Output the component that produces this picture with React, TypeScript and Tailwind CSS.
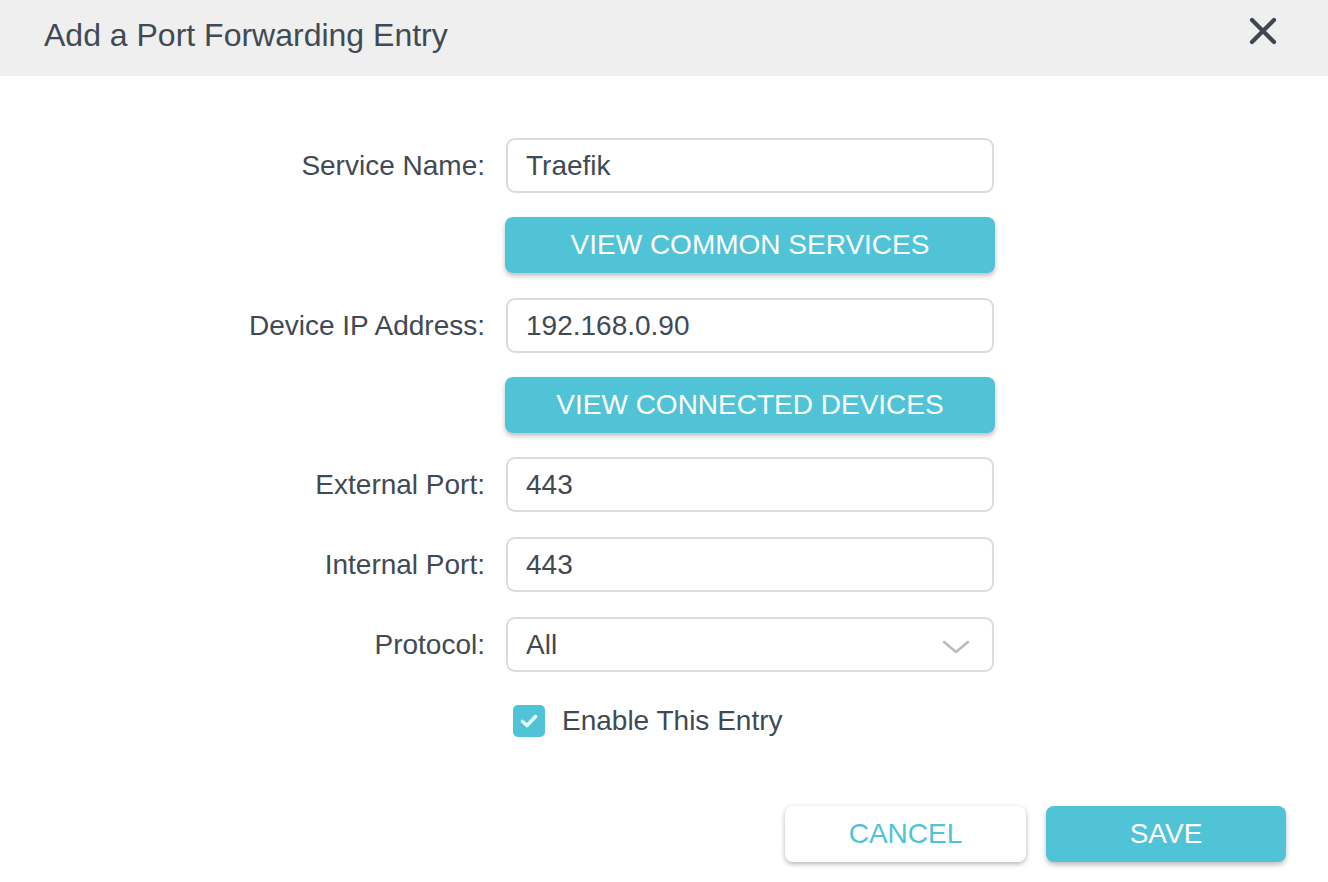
import React from "react";

const font = { fontFamily: '"Liberation Sans", Arial, sans-serif' };

function Field({ label, value, select }: { label: string; value: string; select?: boolean }) {
  return (
    <div className="flex items-center">
      <div className="w-[485px] text-right text-[28px] leading-[32px] text-[#3f4a54]">{label}</div>
      <div className="ml-[21px] w-[488px] h-[55px] rounded-[9px] border-2 border-[#d9dcdd] bg-white flex items-center px-[18px] text-[28px] leading-[32px] text-[#3f4a54] relative">
        {value}
        {select && (
          <svg className="absolute right-[22px] top-[20px]" width="28" height="16" viewBox="0 0 28 16">
            <path d="M2 3 L14 13 L26 3" fill="none" stroke="#b7bcbe" strokeWidth="2.5" strokeLinecap="round" strokeLinejoin="round" />
          </svg>
        )}
      </div>
    </div>
  );
}

function TealButton({ children }: { children: React.ReactNode }) {
  return (
    <div className="flex">
      <div className="ml-[505px] w-[490px] h-[56px] rounded-[8px] bg-[#51c3d6] text-white text-[28px] leading-[32px] flex items-center justify-center shadow-[0_3px_5px_rgba(0,0,0,0.25)]">
        {children}
      </div>
    </div>
  );
}

export default function App() {
  return (
    <div className="w-[1328px] h-[882px] bg-white overflow-hidden" style={font}>
      <div className="h-[76px] bg-[#efefef] flex items-start justify-between pl-[44px] pr-[50px]">
        <div className="pt-[17px] text-[32px] leading-[36px] text-[#3f4a54]">Add a Port Forwarding Entry</div>
        <svg className="mt-[16px]" width="30" height="30" viewBox="0 0 30 30">
          <path d="M4 4 L26 26 M26 4 L4 26" stroke="#3f4650" strokeWidth="4.2" strokeLinecap="round" />
        </svg>
      </div>
      <div className="pt-[62px] flex flex-col">
        <Field label="Service Name:" value="Traefik" />
        <div className="h-[24px]" />
        <TealButton>VIEW COMMON SERVICES</TealButton>
        <div className="h-[25px]" />
        <Field label="Device IP Address:" value="192.168.0.90" />
        <div className="h-[24px]" />
        <TealButton>VIEW CONNECTED DEVICES</TealButton>
        <div className="h-[24px]" />
        <Field label="External Port:" value="443" />
        <div className="h-[25px]" />
        <Field label="Internal Port:" value="443" />
        <div className="h-[25px]" />
        <Field label="Protocol:" value="All" select />
        <div className="flex items-center mt-[33px] ml-[513px]">
          <div className="w-[32px] h-[32px] rounded-[5px] bg-[#51c3d6] flex items-center justify-center">
            <svg width="18" height="14" viewBox="0 0 18 14">
              <path d="M2.5 7.5 L7 11.5 L15.5 2.5" fill="none" stroke="#eafafd" strokeWidth="3.6" strokeLinecap="round" strokeLinejoin="round" />
            </svg>
          </div>
          <div className="ml-[17px] text-[28px] leading-[32px] text-[#3f4a54]">Enable This Entry</div>
        </div>
        <div className="flex justify-end mt-[69px] pr-[42px] gap-[20px]">
          <div className="w-[241px] h-[56px] rounded-[8px] bg-white text-[#51c3d6] text-[28px] leading-[32px] flex items-center justify-center shadow-[0_2px_5px_rgba(0,0,0,0.3)]">
            CANCEL
          </div>
          <div className="w-[240px] h-[56px] rounded-[8px] bg-[#51c3d6] text-white text-[28px] leading-[32px] flex items-center justify-center shadow-[0_3px_5px_rgba(0,0,0,0.25)]">
            SAVE
          </div>
        </div>
      </div>
    </div>
  );
}
